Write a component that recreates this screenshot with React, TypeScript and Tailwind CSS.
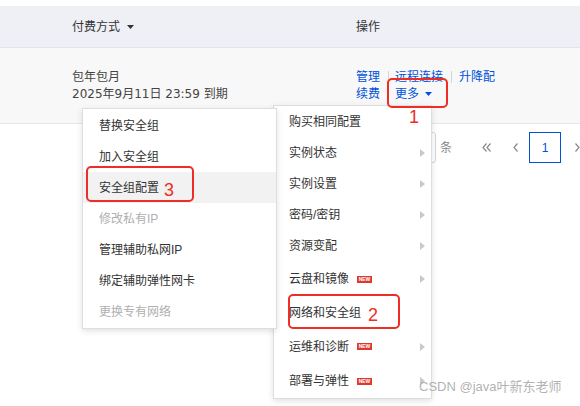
import React from "react";

const RED = "border-[#ee2d24]";

function Caret({ color = "#333" }: { color?: string }) {
  return (
    <svg width="7" height="4" viewBox="0 0 7 4">
      <path d="M0 0H7L3.5 4Z" fill={color} />
    </svg>
  );
}

function SubArrow() {
  return (
    <svg width="5" height="8" viewBox="0 0 5 8">
      <path d="M0 0L5 4L0 8Z" fill="#c9c9c9" />
    </svg>
  );
}

function NewBadge() {
  return (
    <span className="ml-[8px] inline-flex h-[7px] w-[15px] items-center justify-center bg-[#dd3a2f] text-[5px] font-bold leading-none text-white">
      NEW
    </span>
  );
}

const rightItems = [
  { label: "购买相同配置", h: "h-[31px]", arrow: false, badge: false },
  { label: "实例状态", h: "h-[31px]", arrow: true, badge: false },
  { label: "实例设置", h: "h-[31px]", arrow: true, badge: false },
  { label: "密码/密钥", h: "h-[31px]", arrow: true, badge: false },
  { label: "资源变配", h: "h-[31px]", arrow: true, badge: false },
  { label: "云盘和镜像", h: "h-[36px]", arrow: true, badge: true },
  { label: "网络和安全组", h: "h-[32px]", arrow: false, badge: false },
  { label: "运维和诊断", h: "h-[35px]", arrow: true, badge: true },
  { label: "部署与弹性", h: "h-[34px]", arrow: true, badge: true },
];

const leftItems = [
  { label: "替换安全组", disabled: false, active: false },
  { label: "加入安全组", disabled: false, active: false },
  { label: "安全组配置", disabled: false, active: true },
  { label: "修改私有IP", disabled: true, active: false },
  { label: "管理辅助私网IP", disabled: false, active: false },
  { label: "绑定辅助弹性网卡", disabled: false, active: false },
  { label: "更换专有网络", disabled: true, active: false },
];

export default function App() {
  return (
    <div
      className="relative h-[406px] w-[580px] overflow-hidden bg-white text-[12px] text-[#333]"
      style={{ fontFamily: '"Liberation Sans", "Noto Sans CJK SC", sans-serif' }}
    >
      <div className="h-[6px]" />

      {/* table header */}
      <div className="flex h-[42px] items-center border-b border-[#e1e4eb] bg-[#eef0f5] pl-[72px]">
        <div className="flex w-[284px] items-center gap-[7px]">
          付费方式
          <Caret />
        </div>
        <div>操作</div>
      </div>

      {/* row */}
      <div className="flex h-[76px] items-center border-b border-[#e4e6eb] bg-[#f8f8f9] pl-[72px] leading-[17px]">
        <div className="w-[284px] text-[#444]">
          <div>包年包月</div>
          <div style={{ fontFamily: '"DejaVu Sans", "Noto Sans CJK SC", sans-serif' }}>2025年9月11日 23:59 到期</div>
        </div>
        <div className="text-[#0052d9]">
          <div className="flex items-center">
            <span>管理</span>
            <span className="ml-[8px] mr-[6px] h-[12px] w-px bg-[#d4d4d4]" />
            <span>远程连接</span>
            <span className="ml-[8px] mr-[7px] h-[12px] w-px bg-[#d4d4d4]" />
            <span>升降配</span>
          </div>
          <div className="flex items-center">
            <span>续费</span>
            <span className="ml-[15px]">更多</span>
            <span className="ml-[6px]">
              <Caret color="#0052d9" />
            </span>
          </div>
        </div>
      </div>

      {/* pagination */}
      <div className="mt-[8px] flex h-[31px] items-center">
        <div className="ml-[376px] h-[31px] w-[60px] rounded-[3px] border border-[#d6d6d6]" />
        <span className="ml-[4px] text-[#888]">条</span>
        <svg className="ml-[30px]" width="9" height="9" viewBox="0 0 9 9">
          <path d="M4.5 0.5L1 4.5L4.5 8.5M8.5 0.5L5 4.5L8.5 8.5" fill="none" stroke="#888" strokeWidth="1.2" />
        </svg>
        <svg className="ml-[22px]" width="5" height="9" viewBox="0 0 5 9">
          <path d="M4.5 0.5L1 4.5L4.5 8.5" fill="none" stroke="#888" strokeWidth="1.2" />
        </svg>
        <div className="ml-[11px] flex h-[31px] w-[32px] items-center justify-center border border-[#0052d9] text-[#0052d9]">
          1
        </div>
        <svg className="ml-[14px]" width="5" height="9" viewBox="0 0 5 9">
          <path d="M0.5 0.5L4 4.5L0.5 8.5" fill="none" stroke="#888" strokeWidth="1.2" />
        </svg>
      </div>

      {/* more menu */}
      <div className="absolute left-[273px] top-[105px] w-[159px] border border-[#dedede] bg-white shadow-[0_2px_6px_rgba(0,0,0,0.12)]">
        {rightItems.map((it) => (
          <div key={it.label} className={`flex ${it.h} items-center pl-[15px] pr-[6px]`}>
            <span>{it.label}</span>
            {it.badge && <NewBadge />}
            <span className="flex-1" />
            {it.arrow && <SubArrow />}
          </div>
        ))}
      </div>

      {/* network submenu */}
      <div className="absolute left-[82px] top-[108px] w-[195px] border border-[#dedede] bg-white py-px shadow-[0_2px_6px_rgba(0,0,0,0.12)]">
        {leftItems.map((it) => (
          <div
            key={it.label}
            className={`flex h-[31px] items-center pl-[16px] ${it.active ? "bg-[#f2f2f2]" : ""} ${
              it.disabled ? "text-[#b0b0b0]" : ""
            }`}
          >
            {it.label}
          </div>
        ))}
      </div>

      {/* annotations */}
      <div className={`absolute left-[387px] top-[78px] h-[30px] w-[61px] rounded-[5px] border-2 ${RED}`} />
      <div className={`absolute left-[288px] top-[294px] h-[35px] w-[112px] rounded-[5px] border-2 ${RED}`} />
      <div className={`absolute left-[86px] top-[166px] h-[36px] w-[108px] rounded-[5px] border-2 ${RED}`} />
      <div className="absolute left-[409px] top-[108px] text-[18px] leading-[18px] text-[#ee2d24]">1</div>
      <div className="absolute left-[368px] top-[306px] text-[18px] leading-[18px] text-[#ee2d24]">2</div>
      <div className="absolute left-[164px] top-[181px] text-[18px] leading-[18px] text-[#ee2d24]">3</div>

      {/* watermark */}
      <div className="absolute left-[419px] top-[378px] text-[13px] leading-[18px] text-[#a8a8a8]/90">
        CSDN @java叶新东老师
      </div>
    </div>
  );
}
